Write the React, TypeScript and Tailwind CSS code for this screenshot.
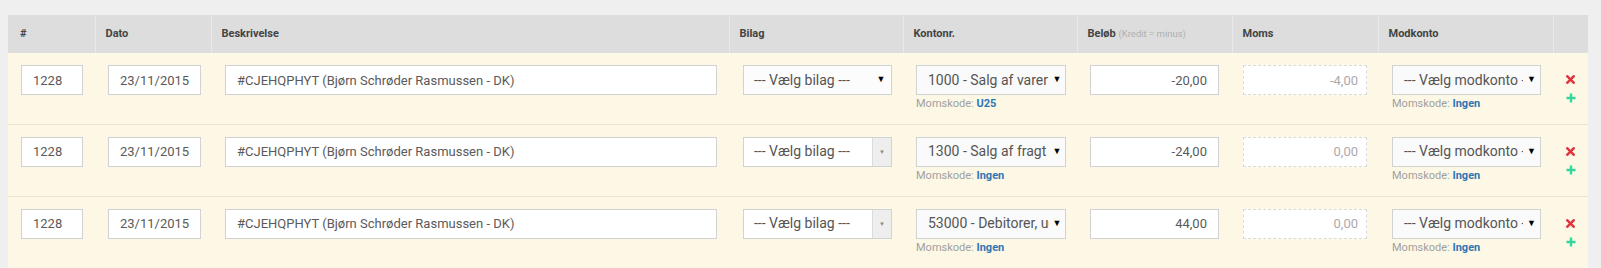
import React from "react";

interface Line {
  nr: string;
  dato: string;
  tekst: string;
  bilagNative: boolean;
  konto: string;
  momskode: string;
  belob: string;
  moms: string;
}

const lines: Line[] = [
  { nr: "1228", dato: "23/11/2015", tekst: "#CJEHQPHYT (Bjørn Schrøder Rasmussen - DK)", bilagNative: true, konto: "1000 - Salg af varer", momskode: "U25", belob: "-20,00", moms: "-4,00" },
  { nr: "1228", dato: "23/11/2015", tekst: "#CJEHQPHYT (Bjørn Schrøder Rasmussen - DK)", bilagNative: false, konto: "1300 - Salg af fragt", momskode: "Ingen", belob: "-24,00", moms: "0,00" },
  { nr: "1228", dato: "23/11/2015", tekst: "#CJEHQPHYT (Bjørn Schrøder Rasmussen - DK)", bilagNative: false, konto: "53000 - Debitorer, udland", momskode: "Ingen", belob: "44,00", moms: "0,00" },
];

const inputCls =
  "h-[30px] border border-[#d2d2d2] bg-white px-[11px] text-[13px] text-[#5a5a5a] outline-none";

function FakeSelect({ text, width, textWidth }: { text: string; width: string; textWidth: string }) {
  return (
    <div className={`flex h-[30px] ${width} items-center border border-[#d2d2d2] bg-[#fafafa] pl-[11px]`}>
      <span className={`${textWidth} shrink-0 overflow-hidden whitespace-nowrap text-[14px] text-[#555]`}>{text}</span>
      <span className="flex-1 text-center text-[9px] text-black">▼</span>
    </div>
  );
}

function Momskode({ code }: { code: string }) {
  return (
    <div className="mt-[2px] text-[11px] leading-[14px] text-[#a0a0a0]">
      Momskode: <span className="font-bold text-[#2f76b5]">{code}</span>
    </div>
  );
}

export default function App() {
  return (
    <div className="min-h-screen bg-[#efefef] pl-2 pr-[13px] pt-[15px]" style={{ fontFamily: "Roboto, 'Liberation Sans', sans-serif" }}>
      <table className="w-[1580px] table-fixed border-collapse">
        <colgroup>
          <col className="w-[87px]" />
          <col className="w-[116px]" />
          <col className="w-[518px]" />
          <col className="w-[174px]" />
          <col className="w-[174px]" />
          <col className="w-[155px]" />
          <col className="w-[146px]" />
          <col className="w-[175px]" />
          <col className="w-[35px]" />
        </colgroup>
        <thead>
          <tr className="h-[38px] bg-[#dddddd] text-left text-[11px] font-bold text-[#444]">
            <th className="px-3">#</th>
            <th className="border-l border-[#e9e9e9] px-[10px]">Dato</th>
            <th className="border-l border-[#e9e9e9] px-[10px]">Beskrivelse</th>
            <th className="border-l border-[#e9e9e9] px-[10px]">Bilag</th>
            <th className="border-l border-[#e9e9e9] px-[10px]">Kontonr.</th>
            <th className="border-l border-[#e9e9e9] px-[10px]">
              Beløb <span className="text-[9.5px] font-normal text-[#b0b0b0]">(Kredit = minus)</span>
            </th>
            <th className="border-l border-[#e9e9e9] px-[10px]">Moms</th>
            <th className="border-l border-[#e9e9e9] px-[10px]">Modkonto</th>
            <th className="border-l border-[#e9e9e9]"></th>
          </tr>
        </thead>
        <tbody>
          {lines.map((l, i) => (
            <tr key={i} className={`bg-[#fcf8e5] ${i === 0 ? "" : "border-t border-[#ebe4cf]"}`}>
              <td className={`${i === 0 ? "h-[71px]" : "h-[72px]"} pl-[13px] pt-3 align-top`}>
                <input readOnly value={l.nr} className={`${inputCls} w-[62px]`} />
              </td>
              <td className="pl-[13px] pt-3 align-top">
                <input readOnly value={l.dato} className={`${inputCls} w-[93px]`} />
              </td>
              <td className="pl-[14px] pt-3 align-top">
                <input readOnly value={l.tekst} className={`${inputCls} w-[492px]`} />
              </td>
              <td className="pl-[14px] pt-3 align-top">
                {l.bilagNative ? (
                  <div className="flex h-[30px] w-[149px] items-center border border-[#d2d2d2] bg-[#fcfcfc] pl-[10px]">
                    <span className="w-[117px] shrink-0 overflow-hidden whitespace-nowrap text-[14px] text-[#555]">--- Vælg bilag ---</span>
                    <span className="flex-1 text-center text-[9px] text-black">▼</span>
                  </div>
                ) : (
                  <div className="flex h-[30px] w-[149px] items-stretch border border-[#d2d2d2] bg-white">
                    <span className="flex flex-1 items-center pl-[10px] text-[14px] text-[#555]">--- Vælg bilag ---</span>
                    <span className="flex w-[19px] items-center justify-center border-l border-[#dcdcdc] bg-[#eeeeee] text-[6px] text-[#888]">▼</span>
                  </div>
                )}
              </td>
              <td className="pl-[13px] pt-3 align-top">
                <FakeSelect text={l.konto} width="w-[150px]" textWidth="w-[121px]" />
                <Momskode code={l.momskode} />
              </td>
              <td className="pl-[13px] pt-3 align-top">
                <input readOnly value={l.belob} className={`${inputCls} w-[129px] text-right`} />
              </td>
              <td className="pl-[11px] pt-3 align-top">
                <input
                  readOnly
                  value={l.moms}
                  className="h-[30px] w-[124px] border border-dashed border-[#dadada] bg-white px-2 text-right text-[13px] text-[#aaa] outline-none"
                />
              </td>
              <td className="pl-[14px] pt-3 align-top">
                <FakeSelect text="--- Vælg modkonto ---" width="w-[149px]" textWidth="w-[119px]" />
                <Momskode code="Ingen" />
              </td>
              <td className="pt-[22px] align-top">
                <div className="flex flex-col items-center gap-[9px]">
                  <svg width="9" height="9" viewBox="0 0 10 10">
                    <path d="M1.5 1.5 L8.5 8.5 M8.5 1.5 L1.5 8.5" stroke="#e2353d" strokeWidth="2.8" strokeLinecap="square" />
                  </svg>
                  <svg width="10" height="10" viewBox="0 0 10 10">
                    <path d="M5 0.5 V9.5 M0.5 5 H9.5" stroke="#35d59d" strokeWidth="2.4" />
                  </svg>
                </div>
              </td>
            </tr>
          ))}
        </tbody>
      </table>
    </div>
  );
}
